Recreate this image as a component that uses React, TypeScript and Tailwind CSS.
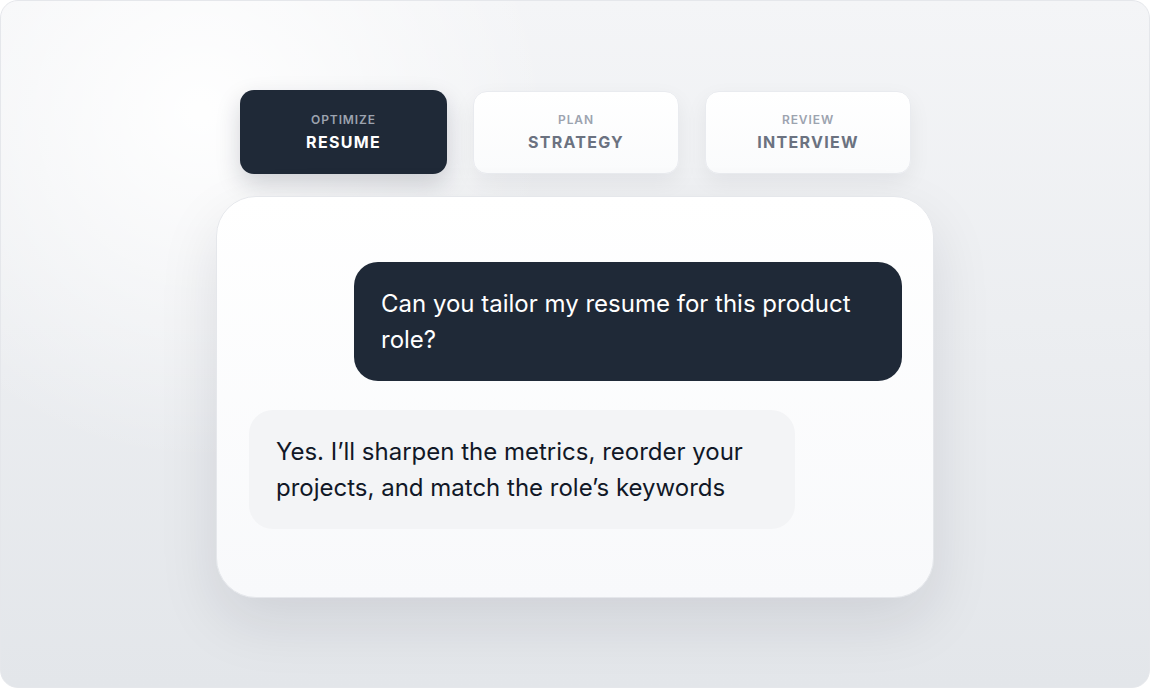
const tabs = [
  { kicker: 'OPTIMIZE', label: 'RESUME', active: true },
  { kicker: 'PLAN', label: 'STRATEGY', active: false },
  { kicker: 'REVIEW', label: 'INTERVIEW', active: false },
]

function Tab({ kicker, label, active }: { kicker: string; label: string; active: boolean }) {
  return (
    <div
      className={
        active
          ? 'w-[207px] h-[84px] rounded-[14px] bg-[#1f2937] flex flex-col items-center justify-center shadow-[0_10px_24px_rgba(15,23,42,0.18)]'
          : 'w-[206px] h-[83px] rounded-[14px] bg-gradient-to-b from-white to-[#fafbfc] border border-[#e9ebef] flex flex-col items-center justify-center shadow-[0_8px_22px_rgba(15,23,42,0.06)]'
      }
    >
      <div className="text-[12px] leading-[15px] font-semibold tracking-[0.9px] text-[#9ca3af]">{kicker}</div>
      <div
        className={`mt-[5px] text-[16px] leading-[20px] font-bold tracking-[1.3px] ${active ? 'text-white' : 'text-[#6b7280]'}`}
      >
        {label}
      </div>
    </div>
  )
}

export default function App() {
  return (
    <div className="w-[1150px] h-[690px] bg-white font-['Inter','Noto_Sans',sans-serif]">
      <div className="relative w-[1150px] h-[688px] rounded-[18px] border border-[#e5e7eb] overflow-hidden bg-gradient-to-b from-[#f4f5f7] to-[#e3e6ea]">
        {/* soft glow */}
        <div className="absolute -left-[150px] -top-[240px] w-[700px] h-[700px] rounded-full bg-[radial-gradient(closest-side,rgba(255,255,255,0.95),rgba(255,255,255,0))]" />

        <div className="relative flex flex-col items-center pt-[89px]">
          <div className="flex gap-[26px] items-center pl-[1px]">
            {tabs.map(t => (
              <Tab key={t.label} {...t} />
            ))}
          </div>

          <div className="mt-[22px] w-[718px] h-[402px] rounded-[40px] border border-[#e5e7eb] bg-gradient-to-b from-white to-[#f8f9fb] shadow-[0_24px_60px_rgba(15,23,42,0.10)] pl-[32px] pr-[31px] pt-[65px] flex flex-col">
            <div className="self-end w-[548px] rounded-[24px] bg-[#1f2937] px-[27px] pt-[24px] pb-[23px] text-[24px] leading-[36px] text-white">
              Can you tailor my resume for this product role?
            </div>
            <div className="mt-[29px] self-start w-[546px] rounded-[24px] bg-[#f3f4f6] px-[27px] pt-[24px] pb-[23px] text-[24px] leading-[36px] text-[#111827]">
              Yes. I’ll sharpen the metrics, reorder your projects, and match the role’s keywords
            </div>
          </div>
        </div>
      </div>
    </div>
  )
}
